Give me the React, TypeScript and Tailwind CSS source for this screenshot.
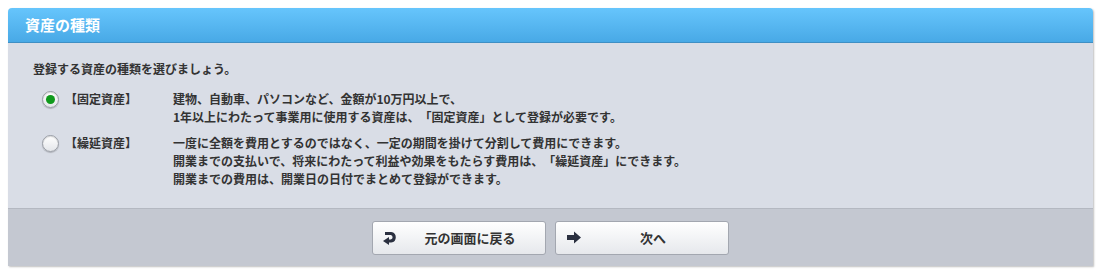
import { useState } from 'react';

const font = { fontFamily: '"Noto Sans CJK JP", "Noto Sans", sans-serif' };

function Radio({ checked, onClick }: { checked: boolean; onClick: () => void }) {
  return (
    <button
      onClick={onClick}
      className="flex h-[17px] w-[17px] shrink-0 items-center justify-center rounded-full border border-[#9a9ea6] bg-gradient-to-b from-white to-[#e4e6ea] shadow-[inset_0_1px_1px_rgba(0,0,0,0.15),0_1px_1px_rgba(0,0,0,0.2)]"
    >
      {checked && <span className="h-[9px] w-[9px] rounded-full bg-[#109a1c]" />}
    </button>
  );
}

const options = [
  {
    label: '【固定資産】',
    lines: [
      '建物、自動車、パソコンなど、金額が10万円以上で、',
      '1年以上にわたって事業用に使用する資産は、「固定資産」として登録が必要です。',
    ],
  },
  {
    label: '【繰延資産】',
    lines: [
      '一度に全額を費用とするのではなく、一定の期間を掛けて分割して費用にできます。',
      '開業までの支払いで、将来にわたって利益や効果をもたらす費用は、「繰延資産」にできます。',
      '開業までの費用は、開業日の日付でまとめて登録ができます。',
    ],
  },
];

export default function App() {
  const [selected, setSelected] = useState(0);

  return (
    <div className="h-[273px] w-[1102px] bg-white pl-2 pr-[9px] pt-2 [text-spacing-trim:space-all]" style={font}>
      <div className="overflow-hidden rounded-t-[4px] shadow-[1px_1px_2px_rgba(0,0,0,0.25)]">
        <div className="flex h-[35px] items-center border-b border-[#3f8fc4] bg-gradient-to-b from-[#66c5fc] to-[#48a9e6] pl-[17px]">
          <h1 className="text-[15px] font-bold text-white">資産の種類</h1>
        </div>
        <div className="bg-[#d9dde6] pb-[20px] pl-[25px] pt-[17px] text-[12px] font-bold leading-[18px] text-[#333]">
          <p>登録する資産の種類を選びましょう。</p>
          <div className="mt-[12px] flex flex-col gap-[8px] pl-[9px]">
            {options.map((o, i) => (
              <div key={o.label} className="flex items-start">
                <div className="mt-[1px]">
                  <Radio checked={selected === i} onClick={() => setSelected(i)} />
                </div>
                <span className="ml-[6px] w-[108px] shrink-0">{o.label}</span>
                <div>
                  {o.lines.map((l) => (
                    <p key={l}>{l}</p>
                  ))}
                </div>
              </div>
            ))}
          </div>
        </div>
        <div className="flex h-[58px] items-center justify-center gap-[9px] border-t border-[#b4b8c1] bg-[#c4c8d1]">
          <button className="relative flex h-[34px] w-[174px] items-center justify-center rounded-[3px] border border-[#a3a7b0] bg-gradient-to-b from-white to-[#e6e8ec] pl-[22px] text-[13px] font-bold text-[#333]">
            <svg className="absolute left-[9px]" width="15" height="14" viewBox="0 0 15 14">
              <path d="M3 2.5 H9 A3.8 3.8 0 0 1 9 10 H6" fill="none" stroke="#2b3040" strokeWidth="3.2" />
              <path d="M7 6 L1 10 L7 14 Z" fill="#2b3040" />
            </svg>
            元の画面に戻る
          </button>
          <button className="relative flex h-[34px] w-[174px] items-center justify-center rounded-[3px] border border-[#a3a7b0] bg-gradient-to-b from-white to-[#e6e8ec] pl-[22px] text-[13px] font-bold text-[#333]">
            <svg className="absolute left-[10px]" width="16" height="13" viewBox="0 0 16 13">
              <path d="M1 4 H8 V0.5 L15 6.5 L8 12.5 V9 H1 Z" fill="#2b3040" />
            </svg>
            次へ
          </button>
        </div>
      </div>
    </div>
  );
}
